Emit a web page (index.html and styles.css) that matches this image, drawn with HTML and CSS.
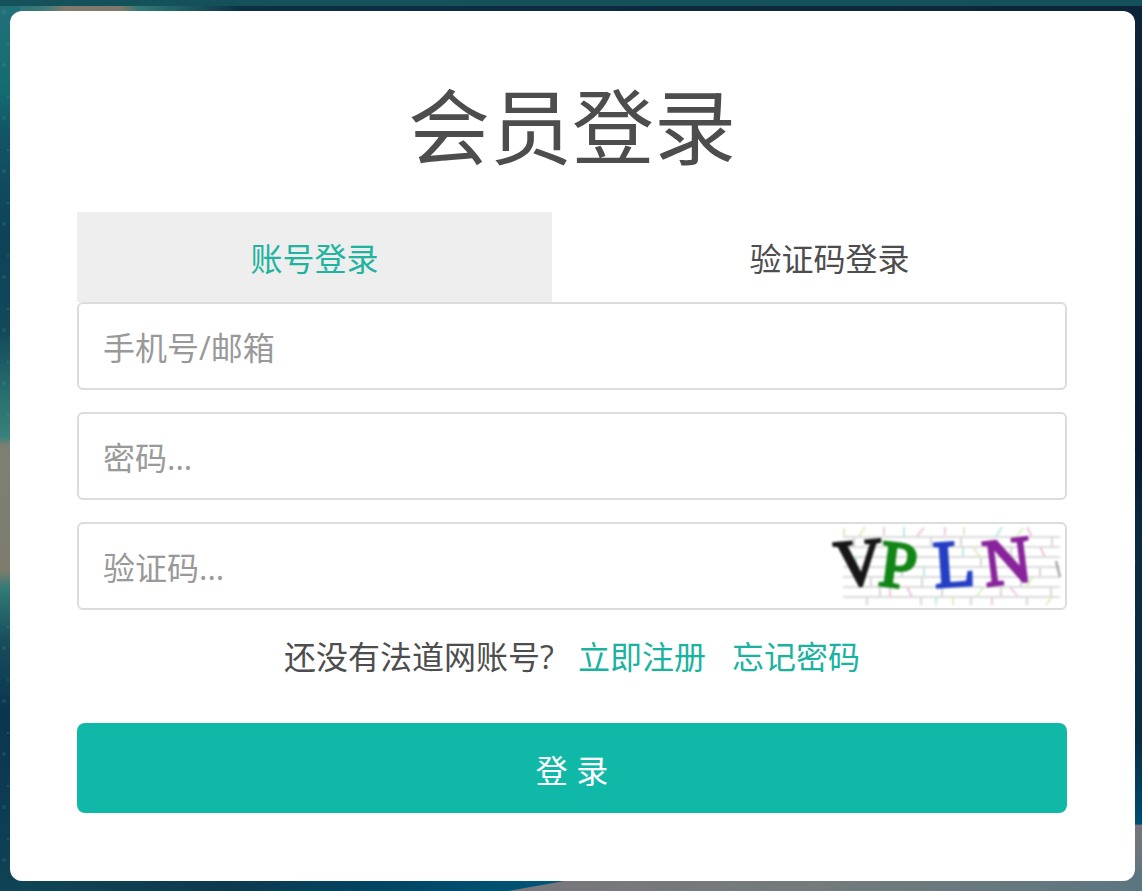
FILE: index.html
```html
<!DOCTYPE html>
<html lang="zh-CN">
<head>
<meta charset="utf-8">
<title>会员登录</title>
<meta name="viewport" content="width=device-width, initial-scale=1">
<link rel="stylesheet" href="styles.css">
</head>
<body>
<svg class="backdrop" viewBox="0 0 1142 891" preserveAspectRatio="none" aria-hidden="true">
  <defs>
    <linearGradient id="left" x1="0" y1="0" x2="0" y2="1">
      <stop offset="0" stop-color="#23707a"/>
      <stop offset=".1" stop-color="#146c73"/>
      <stop offset=".15" stop-color="#125564"/>
      <stop offset=".26" stop-color="#0d4358"/>
      <stop offset=".37" stop-color="#12485a"/>
      <stop offset=".44" stop-color="#276e6f"/>
      <stop offset=".49" stop-color="#39817a"/>
      <stop offset=".5" stop-color="#7c8073"/>
      <stop offset=".64" stop-color="#7e7c6c"/>
      <stop offset=".66" stop-color="#327b76"/>
      <stop offset=".72" stop-color="#174d5c"/>
      <stop offset=".8" stop-color="#0a3550"/>
      <stop offset="1" stop-color="#0f4355"/>
    </linearGradient>
    <linearGradient id="right" x1="0" y1="0" x2="0" y2="1">
      <stop offset="0" stop-color="#0d2438"/>
      <stop offset=".5" stop-color="#061833"/>
      <stop offset=".6" stop-color="#0a2a40"/>
      <stop offset=".83" stop-color="#0a2c42"/>
      <stop offset=".91" stop-color="#00476b"/>
      <stop offset=".925" stop-color="#014e72"/>
      <stop offset=".926" stop-color="#77757b"/>
      <stop offset="1" stop-color="#5b7680"/>
    </linearGradient>
    <linearGradient id="top">
      <stop offset="0" stop-color="#23707a"/>
      <stop offset=".04" stop-color="#3c7a76"/>
      <stop offset=".06" stop-color="#807b6f"/>
      <stop offset=".11" stop-color="#7f796d"/>
      <stop offset=".125" stop-color="#377873"/>
      <stop offset=".16" stop-color="#216168"/>
      <stop offset=".22" stop-color="#0c2f46"/>
      <stop offset="1" stop-color="#0d2438"/>
    </linearGradient>
    <linearGradient id="bottom">
      <stop offset="0" stop-color="#104655"/>
      <stop offset=".2" stop-color="#0d394f"/>
      <stop offset=".35" stop-color="#014665"/>
      <stop offset=".5" stop-color="#00577a"/>
    </linearGradient>
    <linearGradient id="cloud">
      <stop offset="0" stop-color="#79777c"/>
      <stop offset=".5" stop-color="#737b7c"/>
      <stop offset="1" stop-color="#5b7680"/>
    </linearGradient>
    <pattern id="stars" width="37" height="53" patternUnits="userSpaceOnUse">
      <circle cx="4" cy="12" r="2" fill="#7bb0b0" opacity=".15"/>
      <circle cx="25" cy="31" r="1" fill="#7bb0b0" opacity=".3"/>
      <circle cx="8" cy="44" r="1" fill="#7bb0b0" opacity=".25"/>
    </pattern>
  </defs>
  <rect width="1142" height="891" fill="url(#right)"/>
  <rect width="1100" height="30" fill="url(#top)"/>
  <rect y="860" width="1125" height="31" fill="url(#bottom)"/>
  <path d="M508 891 570 880 1110 870H1142V891Z" fill="url(#cloud)"/>
  <rect width="20" height="891" fill="url(#left)"/>
  <rect width="20" height="430" fill="url(#stars)"/>
  <rect y="600" width="20" height="291" fill="url(#stars)"/>
  <rect x="20" y="881" width="220" height="10" fill="url(#stars)"/>
  <rect x="1132" width="10" height="800" fill="url(#stars)" opacity=".4"/>
</svg>
<div class="topbar"></div>
<main class="card">
  <h1 class="title">会员登录</h1>
  <form class="form">
    <div class="tabs">
      <button class="tab tab-active" type="button">账号登录</button>
      <button class="tab" type="button">验证码登录</button>
    </div>
    <div class="fields">
      <input class="field" type="text" aria-label="手机号/邮箱" placeholder="手机号/邮箱">
      <input class="field" type="password" aria-label="密码" placeholder="密码...">
      <div class="captcha-row">
        <input class="field" type="text" aria-label="验证码" placeholder="验证码...">
        <svg class="captcha" viewBox="0 0 224 80" role="img" aria-label="VPLN">
          <g fill="none" stroke-width="2">
            <path stroke="#dcdcdc" d="M6 11H223M6 21H223M6 31H223M6 41H223M6 51H223M6 61H223M6 71H223"/>
            <path stroke="#d6d6d6" d="M17 11v10M34 51v10M43 61v10M65 41v10M85 51v10M105 61v10M124 11v10M144 31v10M164 61v10M184 51v10M203 41v10M215 11v10M58 31v10M94 11v10M214 61v10M12 31v10M112 51v10M174 21v10M30 71v8M84 71v8M134 71v8M190 71v8"/>
            <path stroke="#d7efba" d="M7 2v8M28 1l-6 9M67 2v8M127 1v8M147 61l-8 10M186 2l-6 8M136 21l7 10M77 31v10M196 51l-7 10M116 71v8M215 71l-6 8"/>
            <path stroke="#efc5dc" d="M47 1v8M87 2l-7 8M108 1v8M173 61l8 10M190 1l5 10M53 61v10M70 61l5 10M155 71v8M203 21l5 10"/>
            <path stroke="#b9e7e3" d="M67 1v10M87 41v10M126 21v10M165 1l-6 10M99 71v8M19 31v10"/>
            <path stroke="#999" d="M219 35l4 16"/>
          </g>
          <g class="captcha-text">
            <text x="-2" y="59" fill="#171717" stroke="#171717" transform="rotate(-5 20 40)">V</text>
            <text x="43" y="61" fill="#118515" stroke="#118515" transform="rotate(7 60 40)">P</text>
            <text x="97" y="60" fill="#253fc4" stroke="#253fc4" transform="rotate(-4 115 40)">L</text>
            <text x="147" y="57" fill="#89239b" stroke="#89239b" transform="rotate(-7 172 40)">N</text>
          </g>
        </svg>
      </div>
    </div>
    <p class="hint">还没有法道网账号? <a class="link" href="#">立即注册</a><a class="link" href="#">忘记密码</a></p>
    <button class="submit" type="submit">登 录</button>
  </form>
</main>
</body>
</html>
```
FILE: styles.css
```css
* {
  box-sizing: border-box;
}

body {
  margin: 0;
  min-height: 100vh;
  background: #0d2438;
  color: #4d4d4d;
  font-family: "Open Sans", "Noto Sans CJK SC", sans-serif;
  font-size: 32px;
  line-height: 48px;
}

.backdrop {
  position: absolute;
  z-index: -1;
  inset: 0;
  width: 100%;
  height: 100%;
}

.topbar {
  height: 6px;
  background: #15515b;
}

.card {
  margin: 5px 7px 10px 10px;
  padding: 60px 68px 68px 67px;
  border-radius: 12px;
  background: #fff;
}

.title {
  margin: 0 0 31px;
  font-size: 82px;
  font-weight: 400;
  line-height: 110px;
  text-align: center;
}

.tabs {
  display: grid;
  grid-template-columns: 48% 48%;
  justify-content: space-between;
}

.tab {
  height: 90px;
  padding: 4px 0 0;
  border: 0;
  background: transparent;
  color: inherit;
  font: inherit;
  cursor: pointer;
}

.tab-active {
  background: #eee;
  color: #1fb3a0;
}

.fields {
  display: grid;
  gap: 22px;
}

.field {
  display: block;
  width: 100%;
  height: 88px;
  padding: 2px 24px 0;
  border: 2px solid #dcdcdc;
  border-radius: 6px;
  background: #fff;
  color: #4d4d4d;
  font: inherit;
}

.field::placeholder {
  color: #999;
  opacity: 1;
}

.captcha-row {
  position: relative;
}

.captcha {
  position: absolute;
  top: 4px;
  right: 6px;
  width: 224px;
  height: 80px;
  overflow: visible;
  filter: blur(1px);
}

.captcha-text {
  font-family: "Liberation Serif", serif;
  font-size: 66px;
  stroke-width: 3px;
}

.hint {
  margin: 23px 0 42px;
  text-align: center;
}

.link {
  margin-left: 16px;
  color: #1ab39f;
  text-decoration: none;
}

.link + .link {
  margin-left: 26px;
}

.submit {
  display: block;
  width: 100%;
  height: 90px;
  padding: 6px 0 0;
  border: 0;
  border-radius: 8px;
  background: #10b9a7;
  color: #fff;
  font: inherit;
  cursor: pointer;
}
```
